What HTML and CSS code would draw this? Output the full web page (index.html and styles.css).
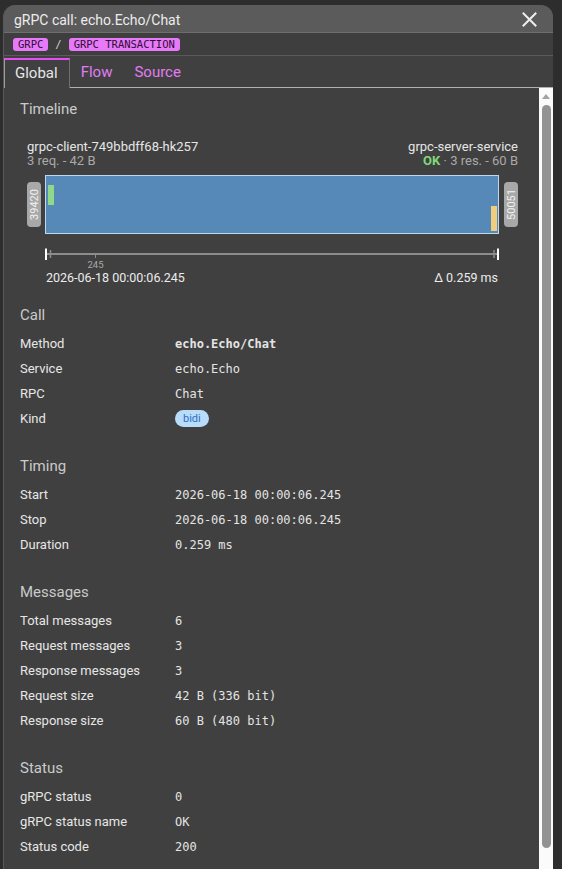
FILE: index.html
```html
<!DOCTYPE html>
<html lang="en">

<head>
    <meta charset="UTF-8">
    <meta name="viewport" content="width=device-width, initial-scale=1.0">
    <title>gRPC call</title>
    <link rel="stylesheet" href="styles.css">
</head>

<body>
    <div class="window">
        <!-- title bar -->
        <div class="titlebar">
            <span class="title">gRPC call: echo.Echo/Chat</span>
            <button class="close" aria-label="Close">
                <svg width="15" height="15" viewBox="0 0 15 15">
                    <path d="M1.5 1.5 L13.5 13.5 M13.5 1.5 L1.5 13.5" stroke="#eeeeee" stroke-width="2" stroke-linecap="square" />
                </svg>
            </button>
        </div>

        <!-- breadcrumb -->
        <div class="crumbs">
            <span class="tag">GRPC</span>
            <span class="crumb-sep">/</span>
            <span class="tag">GRPC TRANSACTION</span>
        </div>

        <!-- tabs -->
        <div id="tabs" class="tabs">
            <button class="tab active">Global</button>
            <button class="tab">Flow</button>
            <button class="tab">Source</button>
            <div class="tab-fill"></div>
        </div>

        <div class="body">
            <div class="content">
                <section class="section section-timeline">
                    <h2 class="section-title">Timeline</h2>
                    <div class="timeline">
                        <div class="peers">
                            <div class="peer">
                                <div class="peer-name">grpc-client-749bbdff68-hk257</div>
                                <div class="peer-meta">3 req. - 42 B</div>
                            </div>
                            <div class="peer peer-right">
                                <div class="peer-name">grpc-server-service</div>
                                <div class="peer-meta"><span class="ok">OK</span> · 3 res. - 60 B</div>
                            </div>
                        </div>

                        <div class="lane">
                            <div class="port"><span>39420</span></div>
                            <div class="bar">
                                <div class="mark mark-req"></div>
                                <div class="mark mark-res"></div>
                            </div>
                            <div class="port"><span>50051</span></div>
                        </div>

                        <svg class="axis" width="454" height="26" viewBox="0 0 454 26">
                            <line x1="1" y1="9" x2="453" y2="9" stroke="#8c8c8c" stroke-width="2" />
                            <line x1="1" y1="3.5" x2="1" y2="15" stroke="#ffffff" stroke-width="2" />
                            <line x1="5.5" y1="5" x2="5.5" y2="13" stroke="#8c8c8c" stroke-width="1.5" />
                            <line x1="50.5" y1="9" x2="50.5" y2="13" stroke="#8c8c8c" stroke-width="1" />
                            <text x="50.5" y="23" text-anchor="middle" class="axis-label">245</text>
                            <line x1="449" y1="5" x2="449" y2="13" stroke="#8c8c8c" stroke-width="1.5" />
                            <line x1="453" y1="3.5" x2="453" y2="15" stroke="#ffffff" stroke-width="2" />
                        </svg>

                        <div class="axis-dates">
                            <span>2026-06-18 00:00:06.245</span>
                            <span>Δ 0.259 ms</span>
                        </div>
                    </div>
                </section>

                <section class="section">
                    <h2 class="section-title">Call</h2>
                    <dl class="props">
                        <dt>Method</dt>
                        <dd class="mono strong">echo.Echo/Chat</dd>
                        <dt>Service</dt>
                        <dd class="mono">echo.Echo</dd>
                        <dt>RPC</dt>
                        <dd class="mono">Chat</dd>
                        <dt>Kind</dt>
                        <dd><span class="pill">bidi</span></dd>
                    </dl>
                </section>

                <section class="section">
                    <h2 class="section-title">Timing</h2>
                    <dl class="props">
                        <dt>Start</dt>
                        <dd class="mono">2026-06-18 00:00:06.245</dd>
                        <dt>Stop</dt>
                        <dd class="mono">2026-06-18 00:00:06.245</dd>
                        <dt>Duration</dt>
                        <dd class="mono">0.259 ms</dd>
                    </dl>
                </section>

                <section class="section">
                    <h2 class="section-title">Messages</h2>
                    <dl class="props">
                        <dt>Total messages</dt>
                        <dd class="mono">6</dd>
                        <dt>Request messages</dt>
                        <dd class="mono">3</dd>
                        <dt>Response messages</dt>
                        <dd class="mono">3</dd>
                        <dt>Request size</dt>
                        <dd class="mono">42 B (336 bit)</dd>
                        <dt>Response size</dt>
                        <dd class="mono">60 B (480 bit)</dd>
                    </dl>
                </section>

                <section class="section">
                    <h2 class="section-title">Status</h2>
                    <dl class="props">
                        <dt>gRPC status</dt>
                        <dd class="mono">0</dd>
                        <dt>gRPC status name</dt>
                        <dd class="mono">OK</dd>
                        <dt>Status code</dt>
                        <dd class="mono">200</dd>
                    </dl>
                </section>
            </div>

            <!-- scrollbar -->
            <div class="scrollbar">
                <div class="scroll-arrow"></div>
                <div class="scroll-thumb"></div>
            </div>
        </div>
    </div>

    <script>
        // switch the active tab on click
        const tabs = document.getElementById('tabs');

        tabs.addEventListener('click', (e) => {
            const tab = e.target.closest('.tab');
            if (!tab) return;
            tabs.querySelectorAll('.tab').forEach(t => t.classList.remove('active'));
            tab.classList.add('active');
        });
    </script>
</body>

</html>
```

FILE: styles.css
```css
/* page */
html,
body {
    height: 100%;
}

body {
    margin: 0;
    padding-top: 5px;
    box-sizing: border-box;
    background-color: #2d2d2d;
    font-family: Roboto, "Liberation Sans", Arial, sans-serif;
    color: #e8e8e8;
    overflow: hidden;
}

.window {
    margin-left: 3px;
    width: 550px;
    height: 100%;
    box-sizing: border-box;
    display: flex;
    flex-direction: column;
    background-color: #404040;
    border-left: 1px solid #585858;
    border-radius: 12px 12px 0 0;
    overflow: hidden;
}

/* title bar */
.titlebar {
    flex: none;
    height: 28px;
    padding: 2px 16px 0 10px;
    box-sizing: border-box;
    display: flex;
    align-items: center;
    justify-content: space-between;
    background-color: #5b5b5b;
    border-bottom: 1px solid #6e6e6e;
}

.title {
    font-size: 14px;
    color: #ececec;
}

.close {
    display: flex;
    padding: 0;
    border: none;
    background: none;
    cursor: pointer;
}

/* breadcrumb */
.crumbs {
    flex: none;
    height: 23px;
    padding: 0 9px;
    box-sizing: border-box;
    display: flex;
    align-items: center;
    gap: 7px;
    background-color: #3e3e3e;
    border-bottom: 1px solid #5a5a5a;
}

.tag {
    padding: 0 5px;
    height: 13px;
    line-height: 13px;
    border-radius: 3px;
    background-color: #e879f9;
    color: #2b0f31;
    font-family: "DejaVu Sans Mono", monospace;
    font-size: 10.5px;
}

.crumb-sep {
    font-family: "DejaVu Sans Mono", monospace;
    font-size: 10.5px;
    color: #d0d0d0;
}

/* tabs */
.tabs {
    flex: none;
    height: 32px;
    display: flex;
    align-items: stretch;
}

.tab {
    margin-top: 2px;
    padding: 0 11px 2px;
    border: none;
    border-bottom: 1px solid #b0b0b0;
    background: none;
    font-family: inherit;
    font-size: 15px;
    color: #e27cf3;
    cursor: pointer;
}

.tab.active {
    padding-left: 10px;
    color: #e6e6e6;
    border-top: 2px solid #e44cf6;
    border-left: 1px solid #9c9c9c;
    border-right: 1px solid #707070;
    border-bottom: none;
}

.tab-fill {
    flex: 1;
    border-bottom: 1px solid #b0b0b0;
}

/* body */
.body {
    flex: 1;
    min-height: 0;
    display: flex;
}

.content {
    flex: 1;
    padding: 11px 16px 0;
    overflow: hidden;
}

.section+.section {
    margin-top: 25px;
}

.section-timeline+.section {
    margin-top: 20px;
}

.section-title {
    margin: 0 0 6px;
    font-size: 15px;
    font-weight: 400;
    line-height: 20px;
    color: #cacaca;
}

/* timeline */
.timeline {
    margin: 21px 0 0 7px;
    width: 491px;
}

.peers {
    display: flex;
    justify-content: space-between;
    font-size: 13px;
    line-height: 14px;
}

.peer-right {
    text-align: right;
}

.peer-name {
    color: #e6e6e6;
}

.peer-meta {
    color: #a9a9a9;
}

.ok {
    color: #80d87a;
    font-weight: 700;
}

.lane {
    margin-top: 7px;
    display: flex;
    align-items: center;
    gap: 4px;
}

.port {
    width: 14px;
    height: 45px;
    display: flex;
    align-items: center;
    justify-content: center;
    border-radius: 4px;
    background-color: #a8a8a8;
    color: #f2f2f2;
    font-size: 11px;
}

.port span {
    writing-mode: vertical-rl;
    transform: rotate(180deg);
}

.lane .port:last-child {
    margin-left: 1px;
}

.bar {
    width: 454px;
    height: 59px;
    box-sizing: border-box;
    padding: 9px 1px 2px 2px;
    display: flex;
    justify-content: space-between;
    background-color: #5689b7;
    border: 1px solid #bfd7ef;
}

.mark {
    width: 6px;
}

.mark-req {
    align-self: flex-start;
    height: 20px;
    background-color: #8fd98a;
}

.mark-res {
    align-self: flex-end;
    height: 25px;
    background-color: #f1cd7e;
}

.axis {
    display: block;
    margin: 11px 0 0 18px;
    overflow: visible;
}

.axis-label {
    font-family: Roboto, "Liberation Sans", Arial, sans-serif;
    font-size: 9.5px;
    fill: #a8a8a8;
}

.axis-dates {
    margin: 0 20px 0 19px;
    display: flex;
    justify-content: space-between;
    font-size: 12.5px;
    line-height: 14px;
    color: #ececec;
}

/* property lists */
.props {
    margin: 0;
    display: grid;
    grid-template-columns: 155px 1fr;
    grid-auto-rows: 25px;
    align-items: center;
    font-size: 13px;
}

.props dt {
    color: #e6e6e6;
}

.props dd {
    margin: 0;
    color: #e4e4e4;
}

.mono {
    font-family: "DejaVu Sans Mono", monospace;
    font-size: 12px;
}

.strong {
    font-weight: 700;
}

.pill {
    display: inline-block;
    padding: 0 8px;
    height: 17px;
    line-height: 17px;
    border-radius: 9px;
    background-color: #b9dcfa;
    color: #2f6fc2;
    font-size: 11px;
    vertical-align: middle;
}

/* scrollbar */
.scrollbar {
    flex: none;
    width: 14px;
    display: flex;
    flex-direction: column;
    align-items: center;
    background-color: #fbfbfb;
}

.scroll-arrow {
    margin-top: 6px;
    width: 0;
    height: 0;
    border-left: 4px solid transparent;
    border-right: 4px solid transparent;
    border-bottom: 5px solid #a3a3a3;
}

.scroll-thumb {
    margin-top: 6px;
    width: 9px;
    height: 743px;
    border-radius: 5px;
    background-color: #939393;
}
```
